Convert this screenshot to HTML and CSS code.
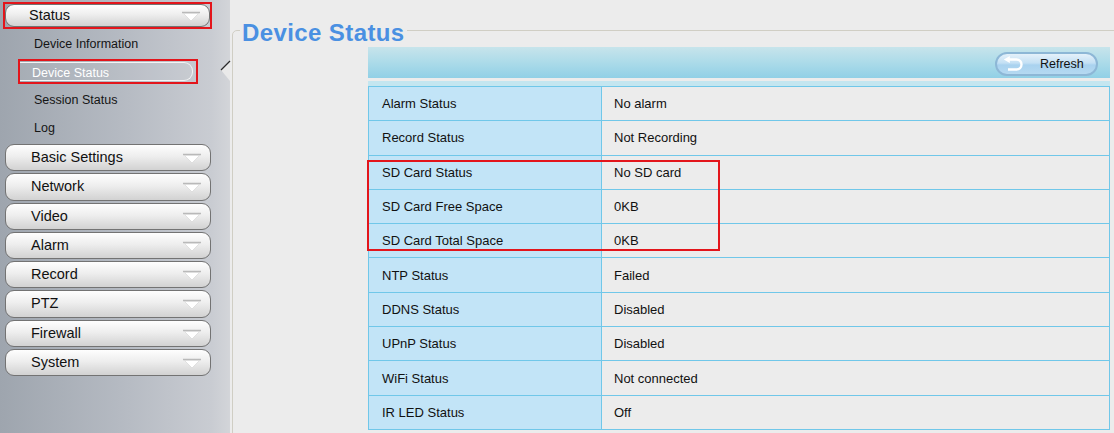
FILE: index.html
```html
<!DOCTYPE html>
<html lang="en">
<head>
    <meta charset="UTF-8">
    <title>Device Status</title>
    <link rel="stylesheet" href="styles.css">
</head>
<body>
    <!-- Left menu -->
    <div class="sidebar">
        <div class="mark-box menu-mark">
            <div class="menu-btn open">Status
                <svg class="menu-arrow" width="20" height="12" viewBox="0 0 20 12"><path d="M1 1.5 H19" stroke="#b9b9b9" stroke-width="1.5"/><polygon points="2.5,2.5 17.5,2.5 10,10" fill="#fff" stroke="#d2d2d2" stroke-width="0.6"/></svg>
            </div>
        </div>

        <div class="submenu">
            <div class="sub-item">Device Information</div>
            <div class="sub-item">
                <div class="mark-box sub-mark">
                    <div class="sub-pill">Device Status</div>
                </div>
            </div>
            <div class="sub-item">Session Status</div>
            <div class="sub-item">Log</div>
        </div>

        <div class="menu-btn">Basic Settings
            <svg class="menu-arrow" width="20" height="12" viewBox="0 0 20 12"><path d="M1 1.5 H19" stroke="#b9b9b9" stroke-width="1.5"/><polygon points="2.5,2.5 17.5,2.5 10,10" fill="#fff" stroke="#d2d2d2" stroke-width="0.6"/></svg>
        </div>
        <div class="menu-btn">Network
            <svg class="menu-arrow" width="20" height="12" viewBox="0 0 20 12"><path d="M1 1.5 H19" stroke="#b9b9b9" stroke-width="1.5"/><polygon points="2.5,2.5 17.5,2.5 10,10" fill="#fff" stroke="#d2d2d2" stroke-width="0.6"/></svg>
        </div>
        <div class="menu-btn">Video
            <svg class="menu-arrow" width="20" height="12" viewBox="0 0 20 12"><path d="M1 1.5 H19" stroke="#b9b9b9" stroke-width="1.5"/><polygon points="2.5,2.5 17.5,2.5 10,10" fill="#fff" stroke="#d2d2d2" stroke-width="0.6"/></svg>
        </div>
        <div class="menu-btn">Alarm
            <svg class="menu-arrow" width="20" height="12" viewBox="0 0 20 12"><path d="M1 1.5 H19" stroke="#b9b9b9" stroke-width="1.5"/><polygon points="2.5,2.5 17.5,2.5 10,10" fill="#fff" stroke="#d2d2d2" stroke-width="0.6"/></svg>
        </div>
        <div class="menu-btn">Record
            <svg class="menu-arrow" width="20" height="12" viewBox="0 0 20 12"><path d="M1 1.5 H19" stroke="#b9b9b9" stroke-width="1.5"/><polygon points="2.5,2.5 17.5,2.5 10,10" fill="#fff" stroke="#d2d2d2" stroke-width="0.6"/></svg>
        </div>
        <div class="menu-btn">PTZ
            <svg class="menu-arrow" width="20" height="12" viewBox="0 0 20 12"><path d="M1 1.5 H19" stroke="#b9b9b9" stroke-width="1.5"/><polygon points="2.5,2.5 17.5,2.5 10,10" fill="#fff" stroke="#d2d2d2" stroke-width="0.6"/></svg>
        </div>
        <div class="menu-btn">Firewall
            <svg class="menu-arrow" width="20" height="12" viewBox="0 0 20 12"><path d="M1 1.5 H19" stroke="#b9b9b9" stroke-width="1.5"/><polygon points="2.5,2.5 17.5,2.5 10,10" fill="#fff" stroke="#d2d2d2" stroke-width="0.6"/></svg>
        </div>
        <div class="menu-btn">System
            <svg class="menu-arrow" width="20" height="12" viewBox="0 0 20 12"><path d="M1 1.5 H19" stroke="#b9b9b9" stroke-width="1.5"/><polygon points="2.5,2.5 17.5,2.5 10,10" fill="#fff" stroke="#d2d2d2" stroke-width="0.6"/></svg>
        </div>

        <!-- pointer to the open page -->
        <svg class="pointer" width="11" height="22" viewBox="0 0 11 22"><polygon points="1,10 10,1 10,21" fill="#e9e9e9"/><path d="M1 10 L10 1" stroke="#2a2a2a" stroke-width="1.3"/></svg>
    </div>

    <!-- Main content -->
    <div class="main">
        <fieldset class="panel">
            <legend>Device Status</legend>

            <div class="content">
                <div class="toolbar">
                    <div class="refresh-btn">
                        <svg class="refresh-icon" width="21" height="15" viewBox="0 0 21 15"><path d="M6 3.5 H13.5 A5 5 0 0 1 13.5 13.5 H5" fill="none" stroke="#fff" stroke-width="2.4"/><polygon points="0.8,3.5 6.8,0 6.8,7" fill="#fff"/></svg>
                        <span>Refresh</span>
                    </div>
                </div>
                <div class="strip"></div>

                <div class="table-wrap">
                    <table class="status-table">
                        <tr><td class="label">Alarm Status</td><td>No alarm</td></tr>
                        <tr><td class="label">Record Status</td><td>Not Recording</td></tr>
                        <tr><td class="label">SD Card Status</td><td>No SD card</td></tr>
                        <tr><td class="label">SD Card Free Space</td><td>0KB</td></tr>
                        <tr><td class="label">SD Card Total Space</td><td>0KB</td></tr>
                        <tr><td class="label">NTP Status</td><td>Failed</td></tr>
                        <tr><td class="label">DDNS Status</td><td>Disabled</td></tr>
                        <tr><td class="label">UPnP Status</td><td>Disabled</td></tr>
                        <tr><td class="label">WiFi Status</td><td>Not connected</td></tr>
                        <tr><td class="label">IR LED Status</td><td>Off</td></tr>
                    </table>
                    <!-- highlight over the SD card rows -->
                    <div class="mark-box sd-mark"></div>
                </div>
            </div>
        </fieldset>
    </div>
</body>
</html>
```

FILE: styles.css
```css
/* Global */
body {
    margin: 0;
    background-color: #ececec;
    font-family: "Liberation Sans", Arial, sans-serif;
    color: #111;
    display: flex;
    height: 433px;
    overflow: hidden;
}

/* red annotation boxes */
.mark-box {
    border: 2px solid #e3151b;
    box-sizing: border-box;
}

/* Sidebar */
.sidebar {
    position: relative;
    width: 230px;
    flex-shrink: 0;
    padding-top: 2px;
    box-sizing: border-box;
    background: linear-gradient(to right, #9ea5ae, #b6bbc3 55%, #c9ccd2 92%, #d3d5d9);
}

.menu-btn {
    position: relative;
    width: 206px;
    height: 27.3px;
    margin: 0 0 2px 5px;
    box-sizing: border-box;
    padding-left: 25px;
    border: 1px solid #737373;
    border-radius: 9px;
    background: linear-gradient(#fefefe, #eeeeee 45%, #dcdcdc 80%, #d2d2d2);
    font-size: 14.5px;
    line-height: 25px;
    color: #111;
}

.menu-arrow {
    position: absolute;
    right: 8px;
    top: 8px;
}

.menu-mark {
    width: 209px;
    height: 27px;
    margin-left: 3px;
}

.menu-mark .menu-btn {
    width: 205px;
    height: 23px;
    margin: 0;
    line-height: 21px;
    padding-left: 23px;
}

.menu-mark .menu-arrow {
    top: 6px;
}

.submenu {
    margin-top: 1px;
    margin-bottom: 2px;
}

.sub-item {
    height: 28px;
    display: flex;
    align-items: center;
    padding-left: 34px;
    font-size: 12.5px;
    color: #151515;
}

.sub-item .sub-mark {
    width: 180px;
    height: 25px;
    margin-left: -16px;
    margin-top: -2px;
    padding: 1px 3px 1px 0;
}

.sub-pill {
    height: 100%;
    box-sizing: border-box;
    border: 1px solid #f4f4f4;
    border-left: none;
    border-radius: 0 9px 9px 0;
    padding-left: 12px;
    color: #fff;
    line-height: 20px;
    background: rgba(255, 255, 255, 0.06);
}

.pointer {
    position: absolute;
    right: -1px;
    top: 60px;
}

/* Main area */
.main {
    flex: 1;
    padding-top: 13.5px;
    overflow: hidden;
}

.panel {
    margin: 0 -20px 0 2px;
    padding: 0;
    height: 600px;
    border: 1px solid #d0cec4;
    border-radius: 5px 0 0 0;
}

.panel legend {
    margin-left: 7px;
    padding: 5px 2px 0;
    font-size: 24px;
    line-height: 28px;
    letter-spacing: 0.4px;
    font-weight: bold;
    color: #4a90e2;
}

.content {
    width: 742px;
    margin: 0.5px 0 0 135px;
}

.toolbar {
    height: 31px;
    display: flex;
    justify-content: flex-end;
    align-items: flex-end;
    padding: 0 12px 2px 0;
    box-sizing: border-box;
    background: linear-gradient(#c7e4eb, #acdbe9 50%, #91d0e6);
}

.refresh-btn {
    position: relative;
    width: 103px;
    height: 24px;
    box-sizing: border-box;
    border: 2px solid #8db7d6;
    border-radius: 12px;
    background: linear-gradient(#e4f1fa, #c4e0f4 45%, #a9d2ef 55%, #b5d9f1);
    font-size: 12.5px;
    line-height: 20px;
}

.refresh-btn span {
    position: absolute;
    left: 43px;
    top: 0;
}

.refresh-icon {
    position: absolute;
    left: 6px;
    top: 2px;
}

.strip {
    height: 5px;
    margin-top: 3px;
    background-color: #c4e6f0;
}

/* Status table */
.table-wrap {
    position: relative;
}

.status-table {
    width: 100%;
    border-collapse: collapse;
    border: 1px solid #70c7e9;
    font-size: 13px;
}

.status-table tr {
    height: 34.3px;
}

.status-table td {
    border: 1px solid #70c7e9;
    padding: 0 0 0 12px;
    color: #111;
}

.status-table td.label {
    width: 219px;
    padding-left: 13px;
    background-color: #c2e4f7;
}

.sd-mark {
    position: absolute;
    left: -1px;
    top: 74px;
    width: 353px;
    height: 91px;
}
```
